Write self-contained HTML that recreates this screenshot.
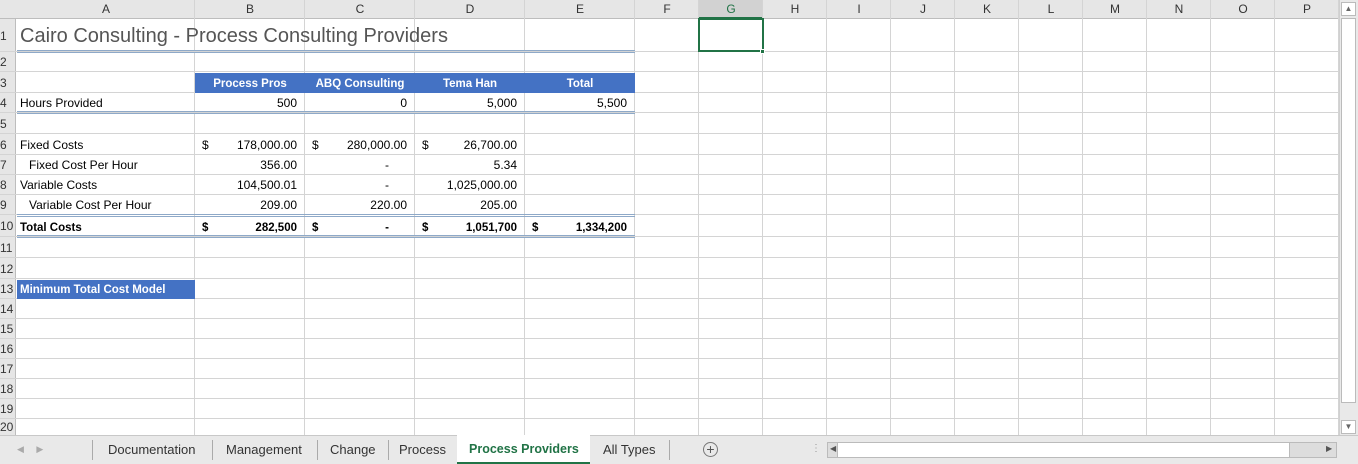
<!DOCTYPE html>
<html><head><meta charset="utf-8">
<style>
*{margin:0;padding:0;box-sizing:border-box}
body{width:1358px;height:464px;overflow:hidden;background:#fff;font-family:"Liberation Sans",Arial,sans-serif;font-size:12px;color:#000;position:relative}
.a{position:absolute;white-space:nowrap}
.hl{position:absolute;height:1px;background:#d4d4d4}
.vl{position:absolute;width:1px;background:#d4d4d4}
.ch{position:absolute;top:0;height:19px;line-height:19px;text-align:center;font-size:12px;color:#333}
.rh{position:absolute;left:0;width:16px;font-size:12px;color:#333;display:flex;align-items:center}
.r{text-align:right}
.b{font-weight:bold;font-size:11.5px;padding-top:2px}
.tab{position:absolute;top:442px;font-size:13px;color:#333}
</style></head><body>
<div class="a" style="left:0;top:0;width:1339px;height:19px;background:#e6e6e6;border-bottom:1px solid #bdbdbd"></div>
<div class="a" style="left:0;top:19px;width:16px;height:416px;background:#e6e6e6;border-right:1px solid #bdbdbd"></div>
<div class="a" style="left:699px;top:0;width:64px;height:19px;background:#d2d2d2;border-bottom:2px solid #217346"></div>
<div id="g"></div>
<div class="a" style="left:195px;top:73px;width:440px;height:20px;background:#4472c4"></div>
<div class="a" style="left:17px;top:280px;width:178px;height:19px;background:#4472c4"></div>
<div class="a" style="left:17px;top:50px;width:618px;height:3px;border-top:1px solid #8ea9c8;border-bottom:1px solid #8ea9c8"></div>
<div class="a" style="left:17px;top:111px;width:618px;height:3px;border-top:1px solid #8ea9c8;border-bottom:1px solid #8ea9c8"></div>
<div class="a" style="left:17px;top:214px;width:618px;height:3px;border-top:1px solid #8ea9c8;border-bottom:1px solid #8ea9c8"></div>
<div class="a" style="left:17px;top:235px;width:618px;height:3px;border-top:1px solid #8ea9c8;border-bottom:1px solid #8ea9c8"></div>
<div class="a" style="left:698px;top:18px;width:66px;height:34px;border:2px solid #217346"></div>
<div class="a" style="left:760px;top:49px;width:5px;height:5px;background:#217346;border:1px solid #fff"></div>
<div class="ch" style="left:17px;width:178px">A</div><div class="ch" style="left:195px;width:110px">B</div><div class="ch" style="left:305px;width:110px">C</div><div class="ch" style="left:415px;width:110px">D</div><div class="ch" style="left:525px;width:110px">E</div>
<div class="ch" style="left:635px;width:64px">F</div><div class="ch" style="left:699px;width:64px;color:#217346">G</div><div class="ch" style="left:763px;width:64px">H</div><div class="ch" style="left:827px;width:64px">I</div><div class="ch" style="left:891px;width:64px">J</div><div class="ch" style="left:955px;width:64px">K</div><div class="ch" style="left:1019px;width:64px">L</div><div class="ch" style="left:1083px;width:64px">M</div><div class="ch" style="left:1147px;width:64px">N</div><div class="ch" style="left:1211px;width:64px">O</div><div class="ch" style="left:1275px;width:64px">P</div>
<div id="rh"></div>
<div class="a" style="left:20px;top:25px;font-size:20px;color:#555">Cairo Consulting - Process Consulting Providers</div>
<div class="a b" style="left:195px;top:76px;width:110px;text-align:center;color:#fff">Process Pros</div>
<div class="a b" style="left:305px;top:76px;width:110px;text-align:center;color:#fff">ABQ Consulting</div>
<div class="a b" style="left:415px;top:76px;width:110px;text-align:center;color:#fff">Tema Han</div>
<div class="a b" style="left:525px;top:76px;width:110px;text-align:center;color:#fff">Total</div>
<div class="a" style="left:20px;top:96px">Hours Provided</div>
<div class="a r" style="left:195px;top:96px;width:102px">500</div>
<div class="a r" style="left:305px;top:96px;width:102px">0</div>
<div class="a r" style="left:415px;top:96px;width:102px">5,000</div>
<div class="a r" style="left:525px;top:96px;width:102px">5,500</div>
<div class="a" style="left:20px;top:138px">Fixed Costs</div>
<div class="a" style="left:202px;top:138px">$</div><div class="a r" style="left:195px;top:138px;width:102px">178,000.00</div>
<div class="a" style="left:312px;top:138px">$</div><div class="a r" style="left:305px;top:138px;width:102px">280,000.00</div>
<div class="a" style="left:422px;top:138px">$</div><div class="a r" style="left:415px;top:138px;width:102px">26,700.00</div>
<div class="a" style="left:29px;top:158px">Fixed Cost Per Hour</div>
<div class="a r" style="left:195px;top:158px;width:102px">356.00</div>
<div class="a r" style="left:305px;top:158px;width:84px">-</div>
<div class="a r" style="left:415px;top:158px;width:102px">5.34</div>
<div class="a" style="left:20px;top:178px">Variable Costs</div>
<div class="a r" style="left:195px;top:178px;width:102px">104,500.01</div>
<div class="a r" style="left:305px;top:178px;width:84px">-</div>
<div class="a r" style="left:415px;top:178px;width:102px">1,025,000.00</div>
<div class="a" style="left:29px;top:198px">Variable Cost Per Hour</div>
<div class="a r" style="left:195px;top:198px;width:102px">209.00</div>
<div class="a r" style="left:305px;top:198px;width:102px">220.00</div>
<div class="a r" style="left:415px;top:198px;width:102px">205.00</div>
<div class="a b" style="left:20px;top:220px">Total Costs</div>
<div class="a b" style="left:202px;top:220px">$</div><div class="a b r" style="left:195px;top:220px;width:102px">282,500</div>
<div class="a b" style="left:312px;top:220px">$</div><div class="a b r" style="left:305px;top:220px;width:84px">-</div>
<div class="a b" style="left:422px;top:220px">$</div><div class="a b r" style="left:415px;top:220px;width:102px">1,051,700</div>
<div class="a b" style="left:532px;top:220px">$</div><div class="a b r" style="left:525px;top:220px;width:102px">1,334,200</div>
<div class="a b" style="left:20px;top:282px;color:#fff">Minimum Total Cost Model</div>
<div class="a" style="left:1339px;top:0;width:19px;height:435px;background:#e9e9e9;border-left:1px solid #d0d0d0"></div>
<div class="a" style="left:1341px;top:2px;width:15px;height:14px;background:#fff;border:1px solid #bbb;font-size:8px;text-align:center;line-height:12px;color:#666">▲</div>
<div class="a" style="left:1341px;top:18px;width:15px;height:385px;background:#fff;border:1px solid #bbb"></div>
<div class="a" style="left:1341px;top:420px;width:15px;height:14px;background:#fff;border:1px solid #bbb;font-size:8px;text-align:center;line-height:12px;color:#666">▼</div>
<div class="a" style="left:0;top:435px;width:1358px;height:29px;background:#e9e9e9;border-top:1px solid #c8c8c8"></div>
<div class="a" style="left:17px;top:444px;font-size:9px;color:#aaa">◀&nbsp;&nbsp;&nbsp;&nbsp;&nbsp;▶</div>
<div class="a" style="left:457px;top:435px;width:133px;height:29px;background:#fff;border-bottom:2px solid #217346"></div>
<div class="tab" style="left:108px">Documentation</div>
<div class="tab" style="left:226px">Management</div>
<div class="tab" style="left:330px">Change</div>
<div class="tab" style="left:399px">Process</div>
<div class="tab" style="left:469px;color:#217346;font-weight:bold;font-size:12.5px">Process Providers</div>
<div class="tab" style="left:603px">All Types</div>
<div class="vl" style="left:92px;top:440px;height:20px;background:#aaa"></div>
<div class="vl" style="left:212px;top:440px;height:20px;background:#aaa"></div>
<div class="vl" style="left:317px;top:440px;height:20px;background:#aaa"></div>
<div class="vl" style="left:388px;top:440px;height:20px;background:#aaa"></div>
<div class="vl" style="left:669px;top:440px;height:20px;background:#aaa"></div>
<div class="a" style="left:703px;top:442px;width:15px;height:15px;border:1px solid #777;border-radius:50%;text-align:center;line-height:12px;font-size:14px;color:#555">+</div>
<div class="a" style="left:811px;top:443px;font-size:10px;color:#999">⋮</div>
<div class="a" style="left:827px;top:442px;width:510px;height:16px;background:#ddd;border:1px solid #bbb"></div>
<div class="a" style="left:837px;top:443px;width:453px;height:14px;background:#fff;border-right:1px solid #bbb;border-left:1px solid #bbb"></div>
<div class="a" style="left:830px;top:444px;font-size:8px;color:#555">◀</div>
<div class="a" style="left:1326px;top:444px;font-size:8px;color:#555">▶</div>
<script>
var rows=[19,52,72,93,113,134,155,175,195,215,237,258,279,299,319,339,359,379,399,419,435];
var cols=[16,195,305,415,525,635,699,763,827,891,955,1019,1083,1147,1211,1275,1339];
var h='';
for(var i=1;i<rows.length-1;i++){h+='<div class="hl" style="left:0;width:1339px;top:'+(rows[i]-1)+'px"></div>';}
for(var j=1;j<cols.length;j++){h+='<div class="vl" style="top:0;height:435px;left:'+(cols[j]-1)+'px"></div>';}
document.getElementById('g').innerHTML=h;
var r='';
for(var i=0;i<20;i++){var t=rows[i],b=rows[i+1];r+='<div class="rh" style="top:'+t+'px;height:'+(b-t)+'px">'+(i+1)+'</div>';}
document.getElementById('rh').innerHTML=r;
</script>
</body></html>
